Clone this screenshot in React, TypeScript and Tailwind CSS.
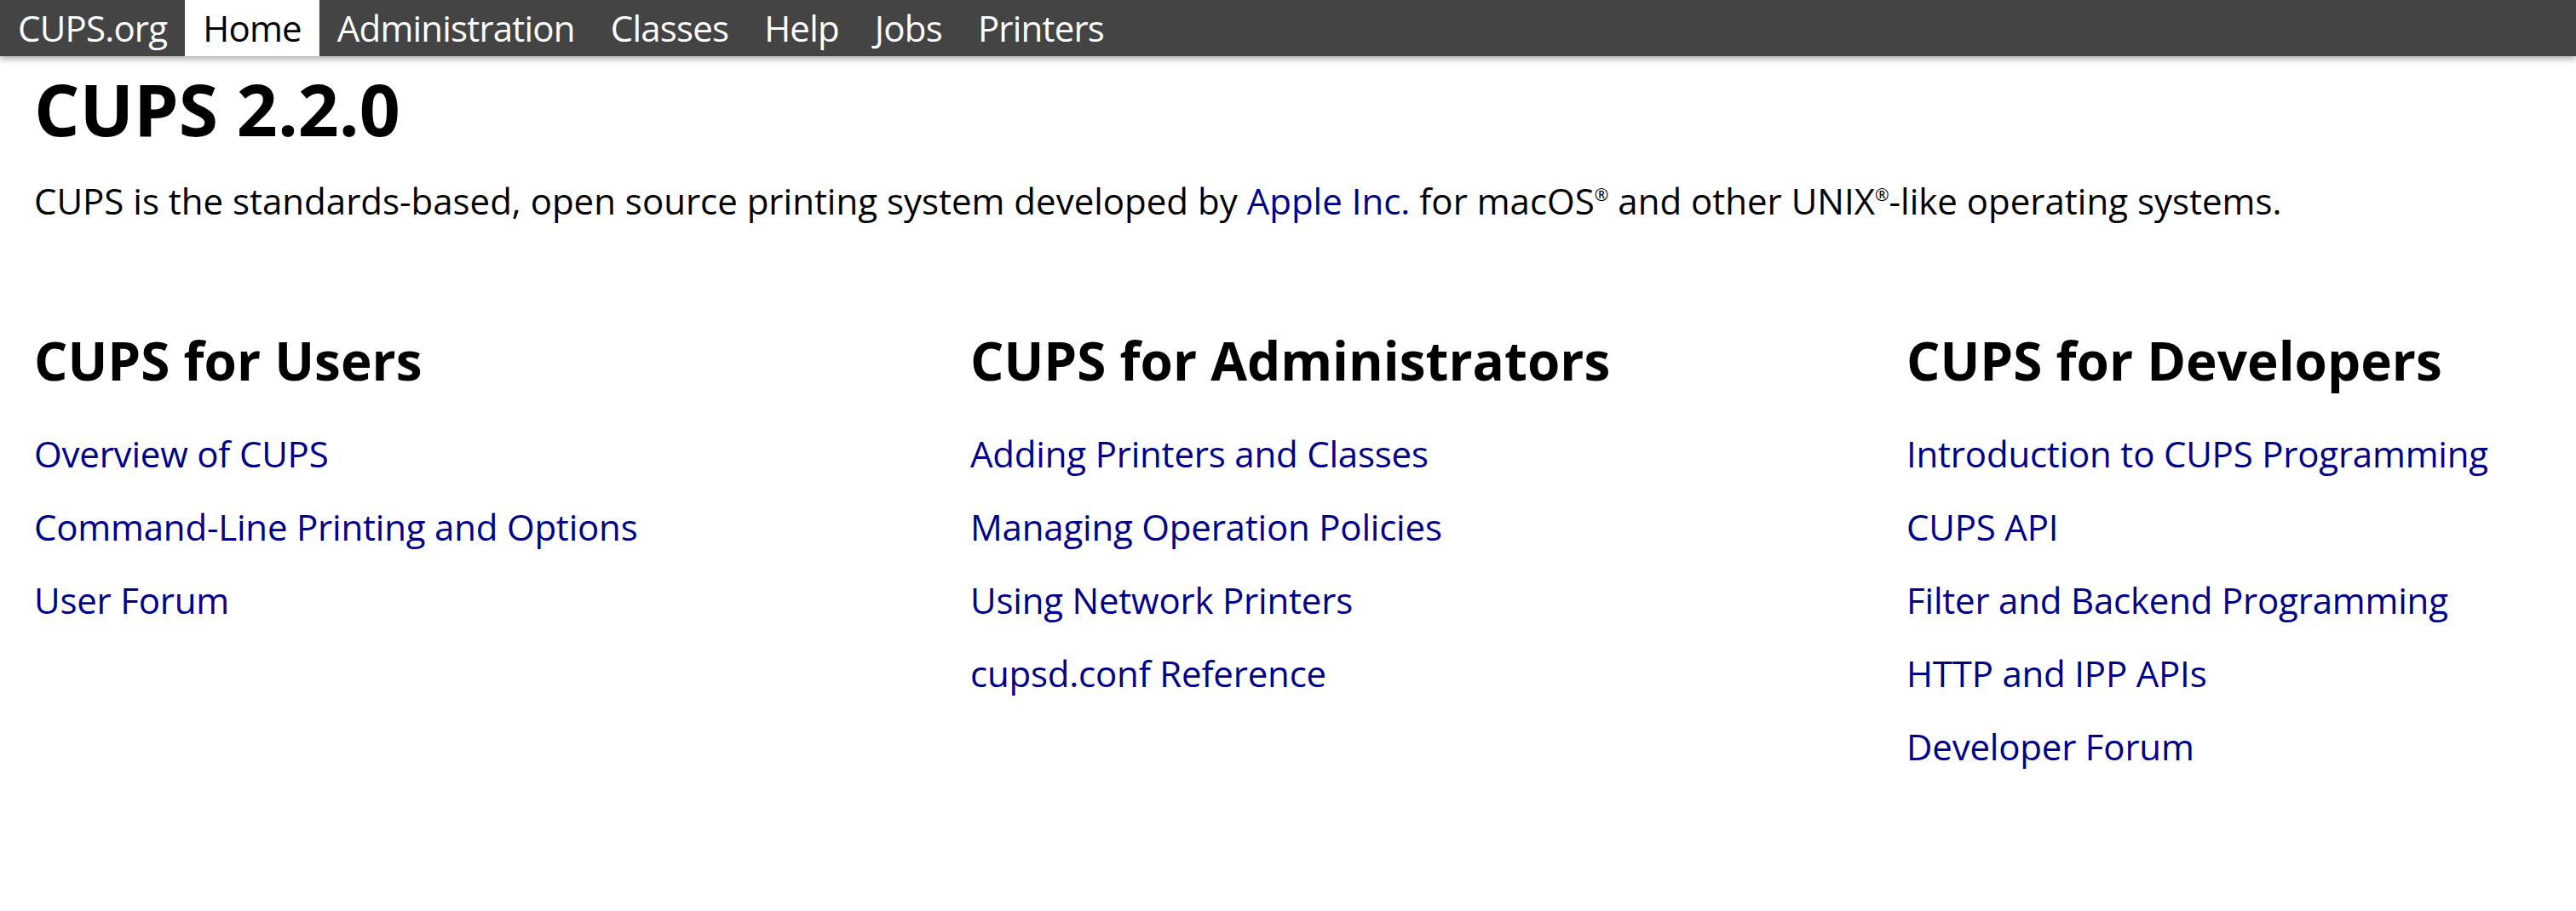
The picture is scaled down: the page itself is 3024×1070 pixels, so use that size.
const navItems = ["CUPS.org", "Home", "Administration", "Classes", "Help", "Jobs", "Printers"];

const columns = [
  {
    title: "CUPS for Users",
    links: ["Overview of CUPS", "Command-Line Printing and Options", "User Forum"],
  },
  {
    title: "CUPS for Administrators",
    links: [
      "Adding Printers and Classes",
      "Managing Operation Policies",
      "Using Network Printers",
      "cupsd.conf Reference",
    ],
  },
  {
    title: "CUPS for Developers",
    links: [
      "Introduction to CUPS Programming",
      "CUPS API",
      "Filter and Backend Programming",
      "HTTP and IPP APIs",
      "Developer Forum",
    ],
  },
];

export default function App() {
  return (
    <div className="min-h-screen bg-white text-black font-['Open_Sans',sans-serif]">
      {/* Header */}
      <nav className="flex h-[66px] bg-[#444444] shadow-[0_3px_8px_rgba(0,0,0,0.35)]">
        {navItems.map((item) => (
          <a
            key={item}
            href="#"
            className={
              item === "Home"
                ? "px-[21px] text-[42px] leading-[66px] tracking-[-0.8px] bg-white text-black"
                : "px-[21px] text-[42px] leading-[66px] tracking-[-0.8px] text-white"
            }
          >
            {item}
          </a>
        ))}
      </nav>

      <main className="px-[40px]">
        <h1 className="mt-[20px] text-[84px] leading-[84px] font-bold">CUPS 2.2.0</h1>
        <p className="mt-[34px] text-[42px] leading-[63px]">
          CUPS is the standards-based, open source printing system developed by{" "}
          <a href="#" className="text-[#000088]">
            Apple Inc.
          </a>{" "}
          for macOS
          <sup className="relative -top-[16px] text-[20px] leading-none align-baseline">®</sup> and other
          UNIX
          <sup className="relative -top-[16px] text-[20px] leading-none align-baseline">®</sup>-like operating
          systems.
        </p>

        {/* Three columns */}
        <div className="mt-[125px] flex">
          {columns.map((col, i) => (
            <div key={col.title} className={i < 2 ? "w-[1099px] shrink-0" : "flex-1"}>
              <h2 className="text-[62px] leading-[63px] font-bold">{col.title}</h2>
              <div className="mt-[35px] flex flex-col">
                {col.links.map((link) => (
                  <a
                    key={link}
                    href="#"
                    className="h-[86px] text-[42px] leading-[86px] tracking-[-0.2px] text-[#000088]"
                  >
                    {link}
                  </a>
                ))}
              </div>
            </div>
          ))}
        </div>
      </main>
    </div>
  );
}
